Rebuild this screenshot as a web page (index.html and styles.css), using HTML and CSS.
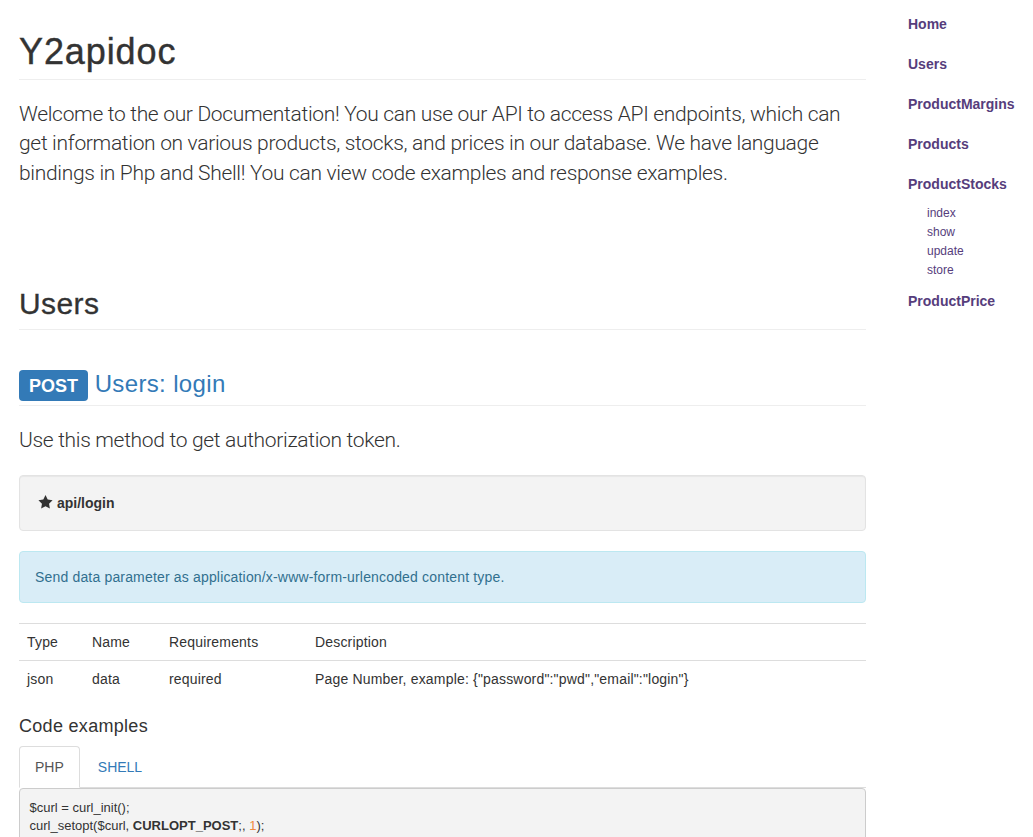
FILE: index.html
```html
<!DOCTYPE html>
<html lang="en">
<head>
<meta charset="utf-8">
<title>Y2apidoc</title>
<link rel="stylesheet" href="styles.css">
</head>
<body>
<div class="layout">
  <main class="content">
    <header class="page-header top-header">
      <h1>Y2apidoc</h1>
    </header>
    <p class="lead intro">Welcome to the our Documentation! You can use our API to access API endpoints, which can get information on various products, stocks, and prices in our database. We have language bindings in Php and Shell! You can view code examples and response examples.</p>

    <div class="page-header section-header">
      <h2>Users</h2>
    </div>

    <div class="page-header endpoint-header">
      <h3><span class="label">POST</span> <a href="#users-login" class="endpoint-link">Users: login</a></h3>
    </div>
    <p class="lead method-desc">Use this method to get authorization token.</p>

    <div class="well">
      <svg class="star" width="17" height="17" viewBox="0 0 24 24" aria-hidden="true"><path d="M12 1.5l3.09 6.26L22 8.77l-5 4.87 1.18 6.88L12 17.27l-6.18 3.25L7 13.64 2 8.77l6.91-1.01L12 1.5z" fill="#333"/></svg><b>api/login</b>
    </div>

    <div class="alert">Send data parameter as application/x-www-form-urlencoded content type.</div>

    <table class="params">
      <colgroup>
        <col class="c-type">
        <col class="c-name">
        <col class="c-req">
        <col class="c-desc">
      </colgroup>
      <tbody>
        <tr><td>Type</td><td>Name</td><td>Requirements</td><td>Description</td></tr>
        <tr><td>json</td><td>data</td><td>required</td><td>Page Number, example: {"password":"pwd","email":"login"}</td></tr>
      </tbody>
    </table>

    <h4 class="code-title">Code examples</h4>
    <ul class="tabs">
      <li class="tab active"><a href="#php">PHP</a></li>
      <li class="tab"><a href="#shell">SHELL</a></li>
    </ul>
    <pre class="code">$curl = curl_init();
curl_setopt($curl, <b>CURLOPT_POST</b>;, <span class="num">1</span>);</pre>
  </main>

  <nav class="sidebar">
    <ul class="nav">
      <li><a href="#home">Home</a></li>
      <li><a href="#users">Users</a></li>
      <li><a href="#productmargins">ProductMargins</a></li>
      <li><a href="#products">Products</a></li>
      <li><a href="#productstocks">ProductStocks</a>
        <ul class="subnav">
          <li><a href="#index">index</a></li>
          <li><a href="#show">show</a></li>
          <li><a href="#update">update</a></li>
          <li><a href="#store">store</a></li>
        </ul>
      </li>
      <li><a href="#productprice">ProductPrice</a></li>
    </ul>
  </nav>
</div>
</body>
</html>
```
FILE: styles.css
```css
html, body {
  margin: 0;
  padding: 0;
  background: #fff;
}

body {
  font-family: "Liberation Sans", Arial, sans-serif;
  font-size: 14px;
  line-height: 1.42857;
  color: #333;
}

.layout {
  display: flex;
  align-items: flex-start;
}

.content {
  flex: 0 0 847px;
  width: 847px;
  padding-left: 19px;
  display: flex;
  flex-direction: column;
}

h1, h2, h3, h4, p, ul, pre {
  margin: 0;
}

h1, h2, h3, h4 {
  font-weight: normal;
  color: #333;
}

.page-header {
  border-bottom: 1px solid #eee;
}

.top-header {
  margin-top: 32px;
  padding-bottom: 7px;
}

.top-header h1 {
  font-size: 36px;
  line-height: 40px;
  letter-spacing: 0.9px;
  -webkit-text-stroke: 0.4px #333;
}

.lead {
  font-family: Roboto, "Liberation Sans", sans-serif;
  font-weight: 300;
  font-size: 21px;
  line-height: 29.4px;
  letter-spacing: -0.32px;
  color: #333;
}

.intro {
  margin-top: 20px;
}

.section-header {
  margin-top: 99px;
  padding-bottom: 9px;
}

.section-header h2 {
  font-size: 30px;
  line-height: 33px;
  letter-spacing: 0.4px;
  -webkit-text-stroke: 0.3px #333;
}

.endpoint-header {
  margin-top: 40px;
  padding-bottom: 4px;
}

.endpoint-header h3 {
  font-size: 24px;
  line-height: 26.4px;
}

.label {
  display: inline-block;
  background: #337ab7;
  color: #fff;
  font-weight: bold;
  font-size: 18px;
  line-height: 18px;
  padding: 7px 10px 6px;
  border-radius: 4px;
}

.endpoint-link {
  color: #337ab7;
  text-decoration: none;
  letter-spacing: 0.35px;
}

.method-desc {
  margin-top: 20px;
}

.well {
  margin-top: 19px;
  padding: 17px 19px;
  line-height: 20px;
  background: #f3f3f3;
  border: 1px solid #e3e3e3;
  border-radius: 4px;
  box-shadow: inset 0 1px 1px rgba(0, 0, 0, 0.05);
}

.star {
  vertical-align: -3px;
  margin-right: 3px;
  margin-left: -2px;
}

.alert {
  margin-top: 20px;
  padding: 15px;
  line-height: 20px;
  background: #d9edf7;
  border: 1px solid #bce8f1;
  border-radius: 4px;
  color: #31708f;
  letter-spacing: 0.17px;
}

.params {
  margin-top: 20px;
  width: 100%;
  border-collapse: collapse;
  border-spacing: 0;
  table-layout: fixed;
  letter-spacing: 0.18px;
}

.c-type { width: 65px; }
.c-name { width: 77px; }
.c-req { width: 146px; }

.params td {
  padding: 8px;
  line-height: 20px;
  border-top: 1px solid #ddd;
  vertical-align: top;
  text-align: left;
}

.code-title {
  margin-top: 20px;
  font-size: 18px;
  line-height: 19.8px;
  letter-spacing: 0.3px;
}

.tabs {
  margin-top: 10px;
  padding: 0;
  list-style: none;
  display: flex;
  border-bottom: 1px solid #ddd;
}

.tab {
  margin-bottom: -1px;
}

.tab a {
  display: block;
  margin-right: 2px;
  padding: 10px 15px;
  line-height: 20px;
  border: 1px solid transparent;
  border-radius: 4px 4px 0 0;
  color: #337ab7;
  text-decoration: none;
}

.tab.active a {
  color: #555;
  background: #fff;
  border-color: #ddd #ddd transparent;
}

.code {
  padding: 9.5px;
  font-family: "Liberation Sans", Arial, sans-serif;
  font-size: 13px;
  line-height: 18.57px;
  color: #333;
  background: #f3f3f3;
  border: 1px solid #ccc;
  border-radius: 4px;
  white-space: pre-wrap;
}

.code b {
  font-weight: bold;
}

.code .num {
  color: #f0883e;
}

.sidebar {
  margin-left: 42px;
  padding-top: 4px;
  flex: 1;
}

.nav, .subnav {
  list-style: none;
  padding: 0;
  margin: 0;
}

.nav > li > a {
  display: block;
  padding: 10px 0;
  line-height: 20px;
  font-weight: bold;
  color: #563d7c;
  text-decoration: none;
}

.subnav {
  padding-left: 19px;
}

.subnav a {
  display: block;
  padding: 1px 0;
  font-size: 12px;
  line-height: 17.14px;
  color: #563d7c;
  text-decoration: none;
}
```
